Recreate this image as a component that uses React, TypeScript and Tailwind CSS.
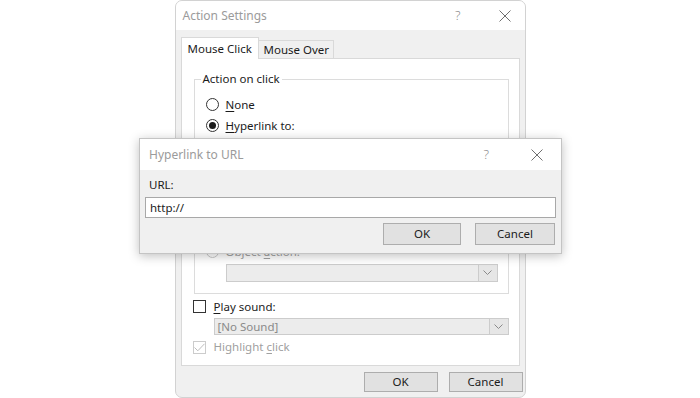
import React from 'react';

const CloseIcon = () => (
  <svg width="12" height="12" viewBox="0 0 12 12" className="block">
    <path d="M0.5 0.5 L11.5 11.5 M11.5 0.5 L0.5 11.5" stroke="#6f6f6f" strokeWidth="1" fill="none" />
  </svg>
);

const Chevron = ({ color = '#555' }: { color?: string }) => (
  <svg width="9" height="5" viewBox="0 0 9 5" className="block">
    <path d="M0.5 0.5 L4.5 4.5 L8.5 0.5" stroke={color} strokeWidth="1" fill="none" />
  </svg>
);

const Radio = ({ checked = false, disabled = false }: { checked?: boolean; disabled?: boolean }) => (
  <span
    className={`flex items-center justify-center w-[13px] h-[13px] rounded-full border bg-white shrink-0 ${
      disabled ? 'border-[#c8c8c8]' : 'border-[#333]'
    }`}
  >
    {checked && <span className="w-[7px] h-[7px] rounded-full bg-[#1b1b1b]" />}
  </span>
);

const Checkbox = ({ checked = false, disabled = false }: { checked?: boolean; disabled?: boolean }) => (
  <span
    className={`flex items-center justify-center w-[13px] h-[13px] border bg-white shrink-0 ${
      disabled ? 'border-[#cccccc]' : 'border-[#333]'
    }`}
  >
    {checked && (
      <svg width="11" height="9" viewBox="0 0 11 9" className="block">
        <path d="M0.5 4.5 L3.8 7.8 L10.5 0.8" stroke={disabled ? '#bdbdbd' : '#333'} strokeWidth="1" fill="none" />
      </svg>
    )}
  </span>
);

const Select = ({ text = '', className = '' }: { text?: string; className?: string }) => (
  <div className={`flex h-[17px] border border-[#cccccc] bg-[#ececec] ${className}`}>
    <span className="flex-1 pl-[3px] leading-[15px] text-[#8a8a8a]">{text}</span>
    <span className="flex items-center justify-center w-[19px] border-l border-[#cccccc] bg-[#e6e6e6]">
      <Chevron color="#8a8a8a" />
    </span>
  </div>
);

const Button = ({ label, className = '' }: { label: string; className?: string }) => (
  <button className={`flex items-center justify-center border border-[#adadad] bg-[#e1e1e1] text-[#1b1b1b] ${className}`}>
    {label}
  </button>
);

const U = ({ children }: { children: React.ReactNode }) => <span className="underline underline-offset-2">{children}</span>;

export default function App() {
  return (
    <div className="relative w-[700px] h-[398px] overflow-hidden bg-white text-[11.5px] whitespace-nowrap text-[#1b1b1b] font-['Segoe_UI','Noto_Sans',sans-serif]">
      {/* Action Settings dialog */}
      <div className="mx-auto w-[351px] h-[398px] flex flex-col border border-[#d2d2d2] rounded-t-[7px] rounded-b-[7px] bg-[#f0f0f0] overflow-hidden">
        <div className="flex items-center h-[29px] bg-white pl-[7px] pr-[14px] shrink-0">
          <span className="text-[#9b9b9b] text-[12px]">Action Settings</span>
          <span className="ml-auto mr-[38px] text-[#8a8a8a] text-[13px] font-light">?</span>
          <CloseIcon />
        </div>

        <div className="flex items-end h-[28px] pl-[5px] shrink-0">
          <div className="relative z-10 -mb-px flex items-center h-[22px] w-[78px] border-t border-x border-[#d9d9d9] bg-white pl-[6px]">
            Mouse Click
          </div>
          <div className="flex items-center h-[18px] w-[75px] border-t border-r border-[#d9d9d9] bg-[#f0f0f0] pl-[5px]">
            Mouse Over
          </div>
        </div>

        <div className="flex flex-col mx-[5px] h-[308px] border border-[#d9d9d9] bg-white shrink-0">
          <fieldset className="mt-[12px] ml-[12px] mr-[10px] h-[223px] border border-[#dcdcdc] pl-[6px] pr-[10px]">
            <legend className="px-[2px] leading-[16px]">Action on click</legend>
            <div className="flex flex-col pl-[5px] pt-[7px]">
              <div className="flex items-center gap-[7px] h-[21px]">
                <Radio />
                <span><U>N</U>one</span>
              </div>
              <div className="flex items-center gap-[7px] h-[21px]">
                <Radio checked />
                <span><U>H</U>yperlink to:</span>
              </div>
              <div className="flex items-center h-[21px] pl-[20px]">
                <Select className="flex-1" />
              </div>
              <div className="flex items-center h-[21px]">
                <Radio disabled />
              </div>
              <div className="flex items-center h-[21px] pl-[20px]">
                <div className="flex-1 h-[17px] border border-[#cccccc] bg-[#ececec]" />
              </div>
              <div className="flex items-center h-[21px]">
                <Radio disabled />
              </div>
              <div className="flex items-center h-[21px] pl-[20px]">
                <Select className="flex-1" />
              </div>
              <div className="flex items-center gap-[7px] h-[21px] text-[#a0a0a0]">
                <Radio disabled />
                <span>Object <U>a</U>ction:</span>
              </div>
              <div className="flex items-center h-[21px] pl-[20px]">
                <Select className="flex-1 h-[18px]" />
              </div>
            </div>
          </fieldset>

          <div className="flex items-center gap-[8px] h-[21px] mt-[2px] ml-[11px]">
            <Checkbox />
            <span><U>P</U>lay sound:</span>
          </div>
          <div className="flex items-center h-[19px] ml-[32px] mr-[10px]">
            <Select text="[No Sound]" className="flex-1" />
          </div>
          <div className="flex items-center gap-[8px] h-[22px] ml-[11px] text-[#a0a0a0]">
            <Checkbox checked disabled />
            <span>Highlight <U>c</U>lick</span>
          </div>
        </div>

        <div className="flex justify-end gap-[11px] pt-[6px] pr-[2px]">
          <Button label="OK" className="w-[74px] h-[20px]" />
          <Button label="Cancel" className="w-[74px] h-[20px]" />
        </div>
      </div>

      {/* Hyperlink to URL dialog */}
      <div className="absolute left-[139px] top-[138px] w-[423px] h-[116px] flex flex-col border border-[#c4c4c4] bg-[#f0f0f0] shadow-[0_2px_10px_rgba(0,0,0,0.25)]">
        <div className="flex items-center h-[31px] bg-white pl-[9px] pr-[18px] shrink-0">
          <span className="text-[#9b9b9b] text-[12px]">Hyperlink to URL</span>
          <span className="ml-auto mr-[42px] text-[#8a8a8a] text-[13px] font-light">?</span>
          <CloseIcon />
        </div>
        <div className="flex flex-col px-[5px]">
          <div className="h-[27px] pl-[4px] pt-[7px] leading-[16px]">URL:</div>
          <div className="flex items-center h-[21px] border border-[#a8a8a8] bg-white pl-[4px]">http://</div>
          <div className="flex justify-end gap-[14px] mt-[5px] pr-[1px]">
            <Button label="OK" className="w-[78px] h-[22px]" />
            <Button label="Cancel" className="w-[80px] h-[22px]" />
          </div>
        </div>
      </div>
    </div>
  );
}
